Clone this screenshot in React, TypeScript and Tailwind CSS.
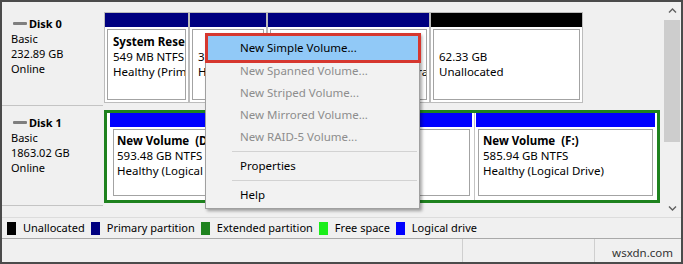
import React from "react";

type Part = {
	width: string;
	bar: string;
	name?: string;
	lines: string[];
};

const disk0: Part[] = [
	{
		width: "w-[85px]",
		bar: "bg-[#000080]",
		name: "System Reserved",
		lines: ["549 MB NTFS", "Healthy (Primary Partition)"],
	},
	{
		width: "w-[78px]",
		bar: "bg-[#000080]",
		name: "",
		lines: ["350 MB NTFS", "Healthy (Recovery Partition)"],
	},
	{
		width: "w-[163px]",
		bar: "bg-[#000080]",
		name: "",
		lines: ["", "Healthy (Boot, Page File, Crash Dump, Primary Partition)"],
	},
	{
		width: "w-[153px]",
		bar: "bg-black",
		name: "",
		lines: ["62.33 GB", "Unallocated"],
	},
];

const legend = [
	{ color: "bg-black", label: "Unallocated" },
	{ color: "bg-[#000080]", label: "Primary partition" },
	{ color: "bg-[#1e821e]", label: "Extended partition" },
	{ color: "bg-[#1aee1a]", label: "Free space" },
	{ color: "bg-[#0000ff]", label: "Logical drive" },
];

const DiskLabel = ({ name, size }: { name: string; size: string }) => (
	<div className="h-full w-[101px] shrink-0 border-b border-[#c4c4c4] pl-[9px] pt-[8px] text-[11px] leading-[15px]">
		<div className="flex items-center font-bold">
			<span className="ml-[2px] mr-[2px] h-[3px] w-[14px] rounded-[1px] bg-[#7f7f7f]" />
			{name}
		</div>
		<div>Basic</div>
		<div>{size}</div>
		<div>Online</div>
	</div>
);

const Primary = ({ p }: { p: Part }) => (
	<div className={`flex h-[91px] flex-col border border-[#bcbcbc] bg-white ${p.width}`}>
		<div className={`h-[14px] shrink-0 ${p.bar}`} />
		<div className="mx-[2px] mb-[2px] mt-[2px] flex-1 overflow-hidden whitespace-pre border border-[#a3a3a3] pl-[5px] pt-[4px] text-[11.5px] leading-[15px]">
			<div className="h-[15px] font-bold">{p.name}</div>
			{p.lines.map((l, i) => (
				<div key={i} className="h-[15px]">
					{l}
				</div>
			))}
		</div>
	</div>
);

const Chevron = ({ down }: { down?: boolean }) => (
	<svg width="9" height="6" viewBox="0 0 9 6">
		<path
			d={down ? "M1 1.5 L4.5 5 L8 1.5" : "M1 4.5 L4.5 1 L8 4.5"}
			fill="none"
			stroke="#606060"
			strokeWidth="1.4"
		/>
	</svg>
);

const MenuItem = ({ children, off }: { children: React.ReactNode; off?: boolean }) => (
	<div className={`flex h-[22px] items-center pl-[34px] ${off ? "text-[#8d8d8d]" : "text-black"}`}>
		{children}
	</div>
);

const Sep = () => (
	<div className="flex h-[7px] items-center">
		<div className="ml-[26px] mr-[2px] h-px flex-1 bg-[#d2d2d2]" />
	</div>
);

export default function App() {
	return (
		<div className="relative flex h-[264px] w-[683px] flex-col border-2 border-[#4b4b4b] bg-[#f0f0f0] font-['Noto_Sans',sans-serif] text-black">
			{/* disks + scrollbar */}
			<div className="flex h-[215px] shrink-0">
				<div className="w-[661px] overflow-hidden pt-[6px]">
					<div className="flex h-[98px]">
						<DiskLabel name="Disk 0" size="232.89 GB" />
						<div className="flex pl-[1px] pt-[4px]">
							{disk0.map((p, i) => (
								<Primary key={i} p={p} />
							))}
						</div>
					</div>

					<div className="mt-[1px] flex h-[99px]">
						<DiskLabel name="Disk 1" size="1863.02 GB" />
						<div className="pl-[1px] pt-[3px]">
							<div className="flex h-[93px] w-[556px] border-[3px] border-[#1e821e] bg-white text-[11.5px] leading-[15px]">
								<div className="flex w-[367px] flex-col pl-[3px] pr-[2px]">
									<div className="h-[14px] shrink-0 bg-[#0000ff]" />
									<div className="mb-[4px] ml-[3px] mr-[2px] mt-[2px] flex-1 overflow-hidden whitespace-pre border border-[#a3a3a3] pl-[3px] pt-[3px]">
										<div className="font-bold">New Volume  (D:)</div>
										<div>593.48 GB NTFS</div>
										<div>Healthy (Logical Drive)</div>
									</div>
								</div>
								<div className="flex flex-1 flex-col border-l border-[#c4c4c4] pl-[1px] pr-[2px]">
									<div className="h-[14px] shrink-0 bg-[#0000ff]" />
									<div className="mx-[2px] mb-[4px] mt-[2px] flex-1 overflow-hidden whitespace-pre border border-[#a3a3a3] pl-[4px] pt-[3px]">
										<div className="font-bold">New Volume  (F:)</div>
										<div>585.94 GB NTFS</div>
										<div>Healthy (Logical Drive)</div>
									</div>
								</div>
							</div>
						</div>
					</div>
				</div>

				<div className="flex w-[18px] flex-col items-center">
					<div className="flex h-[18px] items-center">
						<Chevron />
					</div>
					<div className="w-[16px] flex-1">
						<div className="h-[122px] bg-[#cdcdcd]" />
					</div>
					<div className="flex h-[18px] items-center">
						<Chevron down />
					</div>
				</div>
			</div>

			{/* legend */}
			<div className="flex h-[22px] shrink-0 items-center gap-[6px] border-y border-t-[#dcdcdc] border-b-[#a9a9a9] pl-[5px] pt-px text-[11px]">
				{legend.map((l) => (
					<div key={l.label} className="flex items-center gap-[7px]">
						<span className={`h-[13px] w-[9px] ${l.color}`} />
						<span>{l.label}</span>
					</div>
				))}
			</div>

			{/* status bar */}
			<div className="flex flex-1 text-[11.5px] text-[#333]">
				<div className="w-[461px] border-r border-[#cfcfcf]" />
				<div className="w-[132px] border-r border-[#cfcfcf]" />
				<div className="flex flex-1 items-center justify-end pr-[8px] pt-[4px]">wsxdn.com</div>
			</div>

			{/* context menu */}
			<div className="absolute left-[203px] top-[31px] w-[215px] border border-[#a0a0a0] bg-[#f2f2f2] py-[2px] text-[11.5px] shadow-[2px_2px_3px_rgba(0,0,0,0.35)]">
				<div className="ml-[2px] mr-px flex h-[24px] items-center bg-[#91c9f7] pl-[32px]">
					New Simple Volume...
				</div>
				<MenuItem off>New Spanned Volume...</MenuItem>
				<MenuItem off>New Striped Volume...</MenuItem>
				<MenuItem off>New Mirrored Volume...</MenuItem>
				<MenuItem off>New RAID-5 Volume...</MenuItem>
				<Sep />
				<MenuItem>Properties</MenuItem>
				<Sep />
				<MenuItem>Help</MenuItem>
			</div>
			<div className="absolute left-[203px] top-[31px] h-[30px] w-[216px] border-[3px] border-[#d6372f]" />
		</div>
	);
}
